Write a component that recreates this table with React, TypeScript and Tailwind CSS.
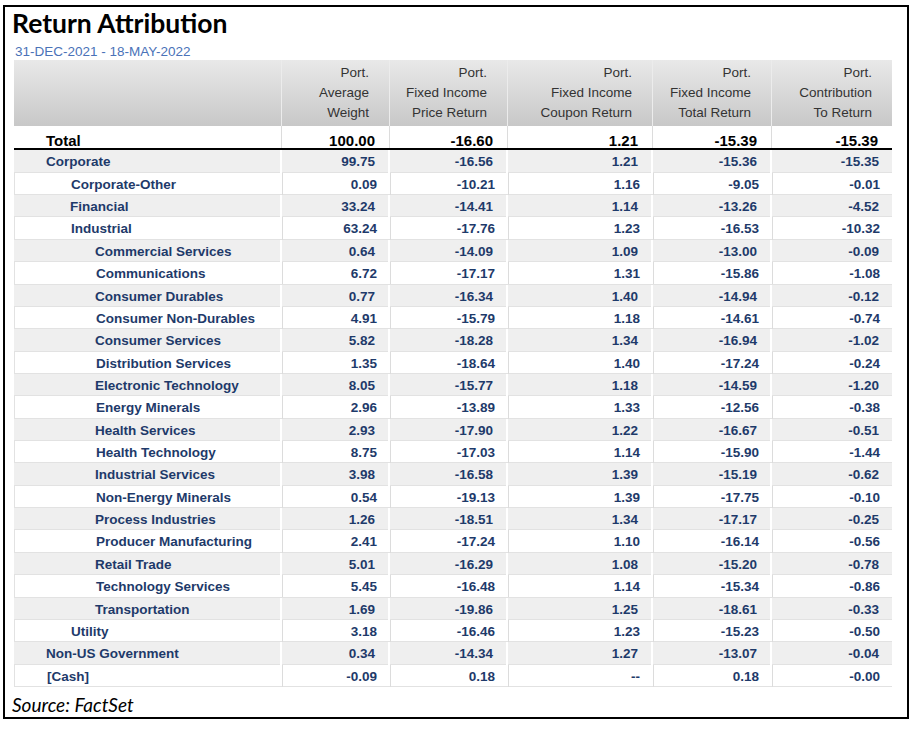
import React from "react";

type Row = { label: string; level: number; v: string[] };

const rows: Row[] = [
  { label: "Corporate", level: 0, v: ["99.75", "-16.56", "1.21", "-15.36", "-15.35"] },
  { label: "Corporate-Other", level: 1, v: ["0.09", "-10.21", "1.16", "-9.05", "-0.01"] },
  { label: "Financial", level: 1, v: ["33.24", "-14.41", "1.14", "-13.26", "-4.52"] },
  { label: "Industrial", level: 1, v: ["63.24", "-17.76", "1.23", "-16.53", "-10.32"] },
  { label: "Commercial Services", level: 2, v: ["0.64", "-14.09", "1.09", "-13.00", "-0.09"] },
  { label: "Communications", level: 2, v: ["6.72", "-17.17", "1.31", "-15.86", "-1.08"] },
  { label: "Consumer Durables", level: 2, v: ["0.77", "-16.34", "1.40", "-14.94", "-0.12"] },
  { label: "Consumer Non-Durables", level: 2, v: ["4.91", "-15.79", "1.18", "-14.61", "-0.74"] },
  { label: "Consumer Services", level: 2, v: ["5.82", "-18.28", "1.34", "-16.94", "-1.02"] },
  { label: "Distribution Services", level: 2, v: ["1.35", "-18.64", "1.40", "-17.24", "-0.24"] },
  { label: "Electronic Technology", level: 2, v: ["8.05", "-15.77", "1.18", "-14.59", "-1.20"] },
  { label: "Energy Minerals", level: 2, v: ["2.96", "-13.89", "1.33", "-12.56", "-0.38"] },
  { label: "Health Services", level: 2, v: ["2.93", "-17.90", "1.22", "-16.67", "-0.51"] },
  { label: "Health Technology", level: 2, v: ["8.75", "-17.03", "1.14", "-15.90", "-1.44"] },
  { label: "Industrial Services", level: 2, v: ["3.98", "-16.58", "1.39", "-15.19", "-0.62"] },
  { label: "Non-Energy Minerals", level: 2, v: ["0.54", "-19.13", "1.39", "-17.75", "-0.10"] },
  { label: "Process Industries", level: 2, v: ["1.26", "-18.51", "1.34", "-17.17", "-0.25"] },
  { label: "Producer Manufacturing", level: 2, v: ["2.41", "-17.24", "1.10", "-16.14", "-0.56"] },
  { label: "Retail Trade", level: 2, v: ["5.01", "-16.29", "1.08", "-15.20", "-0.78"] },
  { label: "Technology Services", level: 2, v: ["5.45", "-16.48", "1.14", "-15.34", "-0.86"] },
  { label: "Transportation", level: 2, v: ["1.69", "-19.86", "1.25", "-18.61", "-0.33"] },
  { label: "Utility", level: 1, v: ["3.18", "-16.46", "1.23", "-15.23", "-0.50"] },
  { label: "Non-US Government", level: 0, v: ["0.34", "-14.34", "1.27", "-13.07", "-0.04"] },
  { label: "[Cash]", level: 0, v: ["-0.09", "0.18", "--", "0.18", "-0.00"] },
];

const headers: string[][] = [
  ["Port.", "Average", "Weight"],
  ["Port.", "Fixed Income", "Price Return"],
  ["Port.", "Fixed Income", "Coupon Return"],
  ["Port.", "Fixed Income", "Total Return"],
  ["Port.", "Contribution", "To Return"],
];

const grid = "grid grid-cols-[268px_108px_118px_145px_119px_120px]";
const arial = { fontFamily: '"Liberation Sans", Arial, sans-serif' };

export default function App() {
  return (
    <div className="w-[919px] h-[729px] bg-white overflow-hidden">
      <div className="ml-[3px] mt-[5px] w-[906px] h-[714px] border-2 border-black flex flex-col">
        <div
          className="pl-[7px] h-[35px] text-[26.5px] font-bold leading-[32px] text-black"
          style={{ fontFamily: "Lato, sans-serif" }}
        >
          Return Attribution
        </div>
        <div
          className="pl-[10px] pt-[2px] h-[19px] text-[13.5px] leading-[17px] text-[#4a72b8]"
          style={arial}
        >
          31-DEC-2021 - 18-MAY-2022
        </div>
        <div className="ml-[9px] w-[878px]" style={arial}>
          {/* Header */}
          <div className={`${grid} h-[66px] bg-linear-to-b from-[#e9e9e9] to-[#c8c8c8]`}>
            <div className="border-r border-[#ececec]" />
            {headers.map((h, i) => (
              <div
                key={i}
                className={`flex flex-col items-end justify-center pr-[20px] text-[13.5px] leading-[20px] text-[#333333] ${
                  i < 4 ? "border-r border-[#ececec]" : ""
                }`}
              >
                {h.map((t) => (
                  <div key={t}>{t}</div>
                ))}
              </div>
            ))}
          </div>
          {/* Total */}
          <div
            className={`${grid} h-[24px] bg-white border-b-2 border-black text-[15px] leading-[15px] font-bold text-black`}
          >
            <div className="pl-[32px] flex items-end border-r border-[#dcdcdc]">Total</div>
            {["100.00", "-16.60", "1.21", "-15.39", "-15.39"].map((v, i) => (
              <div
                key={i}
                className={`flex items-end justify-end pr-[14px] ${i < 4 ? "border-r border-[#dcdcdc]" : ""}`}
              >
                {v}
              </div>
            ))}
          </div>
          {/* Body */}
          {rows.map((r, idx) => {
            const gray = idx % 2 === 0;
            const pad = r.level === 0 ? "pl-[32px]" : r.level === 1 ? "pl-[56px]" : "pl-[81px]";
            const sep = gray ? "border-r-2 border-white" : "border-r border-[#dcdcdc]";
            return (
              <div
                key={r.label}
                className={`${grid} h-[22.36px] text-[13.5px] font-bold text-[#1e3a6a] border-b border-[#e2e2e2] ${
                  gray ? "bg-[#efefef]" : "bg-white border-l border-l-[#e2e2e2]"
                }`}
              >
                <div className={`${pad} pt-[2px] flex items-center whitespace-nowrap ${sep}`}>{r.label}</div>
                {r.v.map((v, i) => (
                  <div
                    key={i}
                    className={`flex items-center justify-end pt-[2px] pr-[13px] ${i < 4 ? sep : ""}`}
                  >
                    {v}
                  </div>
                ))}
              </div>
            );
          })}
        </div>
        <div
          className="pl-[7px] mt-[6px] text-[19px] italic leading-[24px] text-black"
          style={{ fontFamily: "Lato, sans-serif" }}
        >
          Source: FactSet
        </div>
      </div>
    </div>
  );
}
